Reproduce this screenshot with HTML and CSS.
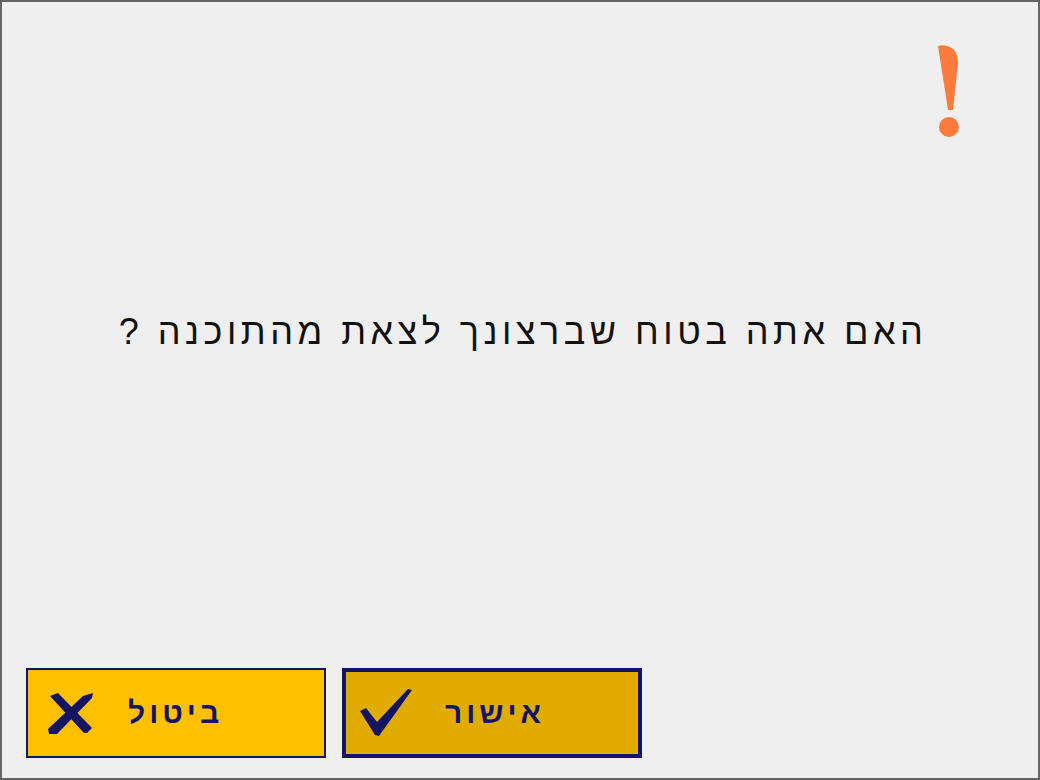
FILE: index.html
```html
<!DOCTYPE html>
<html lang="he">
<head>
<meta charset="utf-8">
<title>אישור יציאה</title>
<link rel="stylesheet" href="styles.css">
</head>
<body>
<div class="window">
  <div class="top">
    <svg class="bang" width="22" height="94" viewBox="0 0 22 94">
      <path d="M0,1 Q6,-1 12,2 Q20,6 20,18 L15,65 L10,65 Z" fill="#fd7b3d"/>
      <circle cx="11" cy="82" r="10" fill="#fd7b3d"/>
    </svg>
  </div>
  <p class="message" dir="rtl">האם אתה בטוח שברצונך לצאת מהתוכנה ?</p>
  <div class="spacer"></div>
  <div class="footer">
    <button class="btn btn-cancel" type="button">
      <svg class="icon-x" width="45" height="41" viewBox="0 0 45 41">
        <path d="M2,3 L10,0 L44,35 L39,40 L36,40 Z" fill="#141464"/>
        <path d="M45,0 L44,5 L9,41 L1,41 L0,36 L35,3 Z" fill="#141464"/>
      </svg>
      <span class="label">ביטול</span>
    </button>
    <button class="btn btn-ok" type="button">
      <svg class="icon-check" width="52" height="48" viewBox="0 0 52 48">
        <path d="M0,22 L6,19 L17,33 L48,0 L52,1 L19,47 L15,46 Z" fill="#141464"/>
      </svg>
      <span class="label">אישור</span>
    </button>
  </div>
</div>
</body>
</html>
```

FILE: styles.css
```css
html, body {
  margin: 0;
  padding: 0;
}

body {
  width: 1040px;
  height: 780px;
  font-family: "Liberation Sans", "DejaVu Sans", sans-serif;
}

.window {
  box-sizing: border-box;
  width: 1040px;
  height: 780px;
  border: 2px solid #646464;
  background: #efefef;
  display: flex;
  flex-direction: column;
}

.top {
  display: flex;
  justify-content: flex-end;
  padding: 43px 78px 0 0;
}

.bang {
  display: block;
}

.message {
  margin: 169px 0 0 0;
  font-size: 36px;
  letter-spacing: 4.5px;
  line-height: 48px;
  color: #111111;
  text-align: center;
  padding-left: 6px;
}

.spacer {
  flex: 1;
}

.footer {
  display: flex;
  gap: 16px;
  padding: 0 0 20px 24px;
}

.btn {
  box-sizing: border-box;
  width: 300px;
  height: 90px;
  display: flex;
  align-items: center;
  margin: 0;
  font-family: "Liberation Sans", "DejaVu Sans", sans-serif;
  font-weight: bold;
  font-size: 30px;
  letter-spacing: 4px;
  color: #141464;
  cursor: pointer;
}

.btn-cancel {
  background: #ffc000;
  border: 2px solid #141464;
  padding: 0 0 0 20px;
  gap: 35px;
}

.btn-ok {
  background: #e0ac00;
  border: 4px solid #141464;
  padding: 0 0 0 14px;
  gap: 33px;
}

.icon-x, .icon-check {
  display: block;
  flex: none;
}

.label {
  line-height: 1;
}
```
